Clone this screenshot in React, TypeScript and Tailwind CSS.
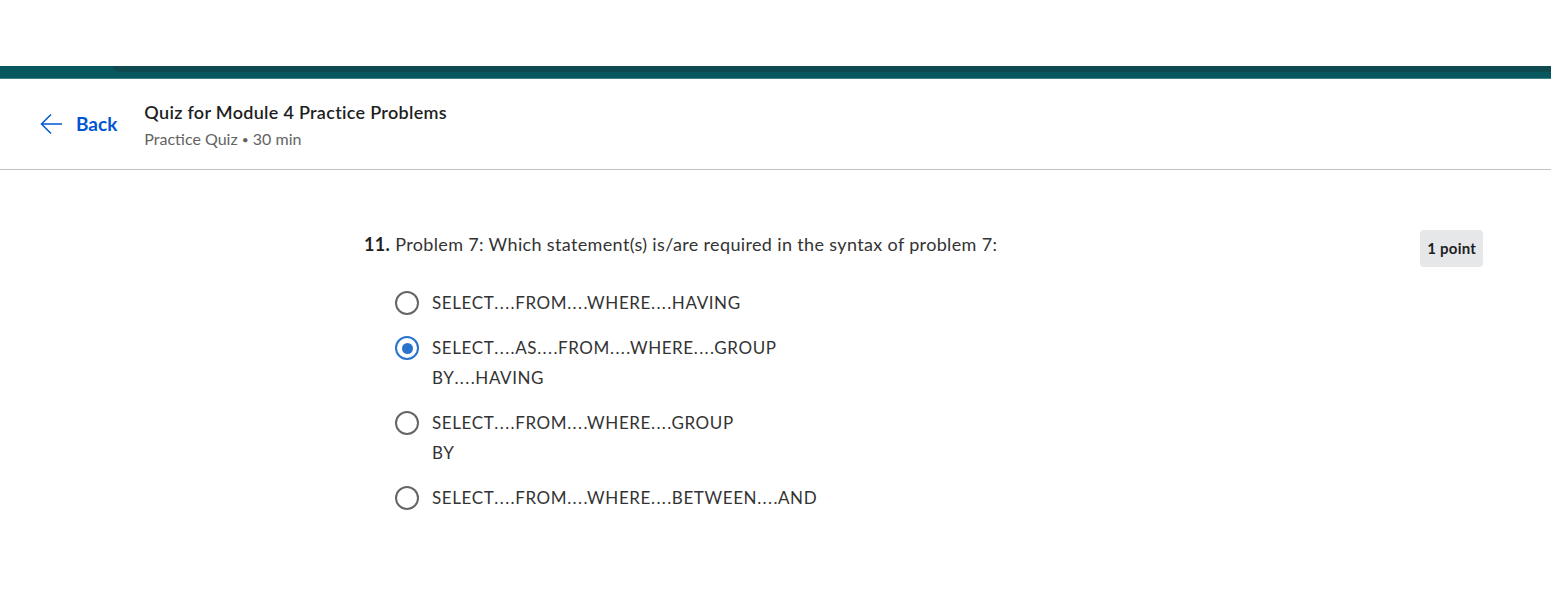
import React from "react";

const options = [
  { lines: ["SELECT….FROM….WHERE….HAVING"], checked: false },
  { lines: ["SELECT….AS….FROM….WHERE….GROUP", "BY….HAVING"], checked: true },
  { lines: ["SELECT….FROM….WHERE….GROUP", "BY"], checked: false },
  { lines: ["SELECT….FROM….WHERE….BETWEEN….AND"], checked: false },
];

// the original shows four evenly spaced dots between keywords
const Dotted = ({ text }: { text: string }) => {
  const parts = text.split("….");
  return (
    <>
      {parts.map((p, i) => (
        <React.Fragment key={i}>
          {p}
          {i < parts.length - 1 && (
            <span>
              <span className="tracking-[1.4px]">...</span>.
            </span>
          )}
        </React.Fragment>
      ))}
    </>
  );
};

const Radio = ({ checked }: { checked: boolean }) => (
  <span
    className={`flex items-center justify-center w-[24px] h-[24px] rounded-full border-[2.5px] shrink-0 ${
      checked ? "border-[#2a73cc]" : "border-[#666666]"
    }`}
  >
    {checked && <span className="w-[11px] h-[11px] rounded-full bg-[#2a73cc]" />}
  </span>
);

export default function App() {
  return (
    <div className="min-h-[599px] bg-white font-['Lato',sans-serif] text-[#1f1f1f]">
      <div className="h-[66px]" />

      {/* teal band */}
      <div className="h-[13px] bg-[#07585e] flex flex-col">
        <div className="h-[6px] flex">
          <div className="w-[113px]" />
          <div className="flex-1 bg-[#0e4a4f] rounded-bl-[14px]" />
        </div>
        <div className="flex-1" />
        <div className="h-px bg-[#3d8287]" />
      </div>

      {/* header */}
      <div className="h-[91px] border-b border-[#c2c2c2] flex items-start pt-[21px]">
        <button className="flex items-center gap-[13px] ml-[40px] mt-[10px] text-[#0056d2] font-bold text-[19px]">
          <svg width="23" height="22" viewBox="0 0 23 22" fill="none" stroke="#0056d2" strokeWidth="1.5">
            <path d="M22 11H2" />
            <path d="M11 1.5L1.5 11L11 20.5" />
          </svg>
          Back
        </button>
        <div className="ml-[27px]">
          <div className="text-[18px] tracking-[0.3px] font-semibold leading-[24px] text-[#1f1f1f]">
            Quiz for Module 4 Practice Problems
          </div>
          <div className="text-[16px] leading-[20px] mt-[5px] text-[#636363]">
            Practice Quiz <span className="text-[12px] align-[1px]">•</span> 30 min
          </div>
        </div>
      </div>

      {/* question */}
      <div className="pl-[364px] pr-[68px] pt-[60px]">
        <div className="flex items-start justify-between">
          <div className="text-[18px] tracking-[0.35px] leading-[28px] text-[#333333]">
            <span className="font-bold text-[#1f1f1f]">11.</span> Problem 7: Which statement(s) is/are required in the syntax of problem 7:
          </div>
          <span className="bg-[#e5e7e8] rounded-[4px] px-[7px] h-[37px] flex items-center text-[15px] tracking-[0.2px] font-bold text-[#1f1f1f]">
            1 point
          </span>
        </div>

        <div className="mt-[21px] pl-[31px] flex flex-col gap-[15px]">
          {options.map((opt, i) => (
            <div key={i} className="flex items-start gap-[13px]">
              <div className="h-[30px] flex items-center">
                <Radio checked={opt.checked} />
              </div>
              <div className="text-[17px] tracking-[0.6px] leading-[30px] text-[#333333] whitespace-nowrap">
                {opt.lines.map((l, j) => (
                  <div key={j}>
                    <Dotted text={l} />
                  </div>
                ))}
              </div>
            </div>
          ))}
        </div>
      </div>
    </div>
  );
}
